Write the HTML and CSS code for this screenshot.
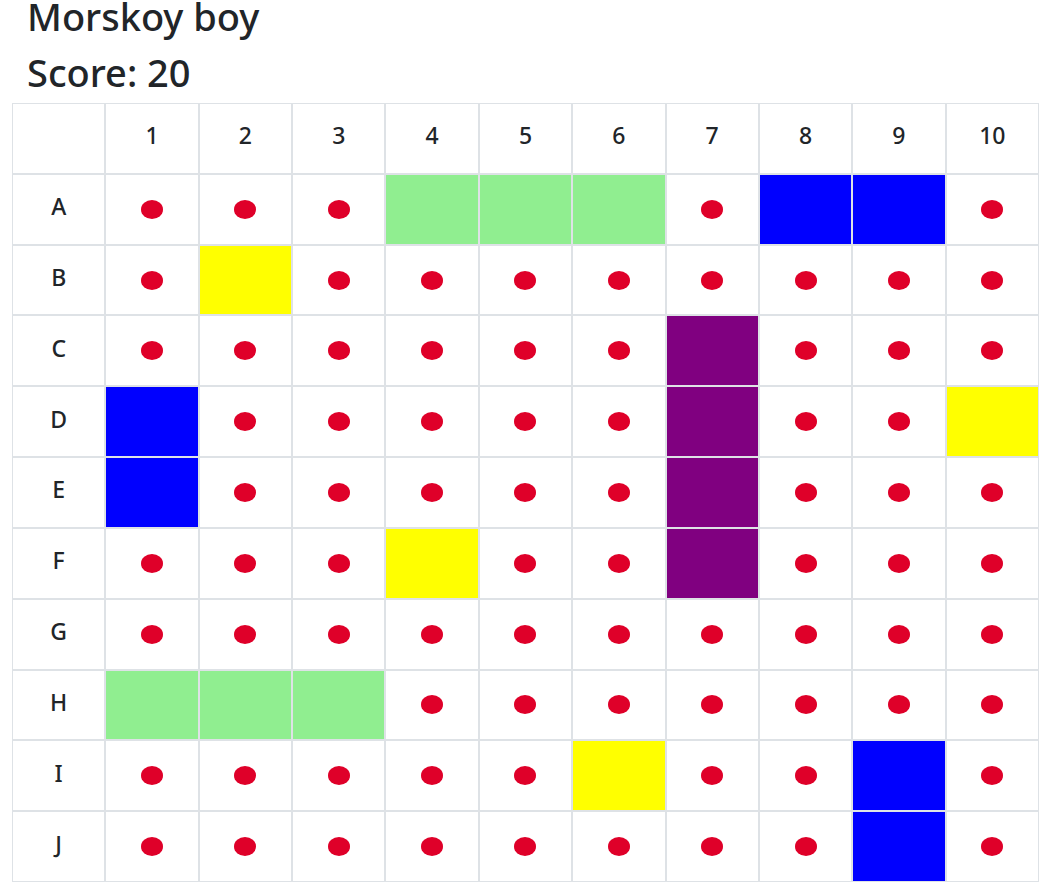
FILE: index.html
```html
<!DOCTYPE html>
<html lang="en">
<head>
<meta charset="utf-8">
<title>Morskoy boy</title>
<link rel="stylesheet" href="styles.css">
</head>
<body>
<header class="heading">
<h1 class="title">Morskoy boy</h1>
<h1 class="title">Score: 20</h1>
</header>
<table class="board">
<tbody id="rows"><tr id="columns"><td></td></tr></tbody>
</table>
<script src="board.js"></script>
</body>
</html>
```

FILE: styles.css
```css
* {
  box-sizing: border-box;
}

body {
  margin: 0;
  padding: 0 10px 10px 12px;
  background: #fff;
  color: #212529;
  font-family: "Segoe UI", "Noto Sans", "Open Sans", sans-serif;
}

.heading {
  display: flex;
  flex-direction: column;
  gap: 24px;
  padding: 0 15px 15px;
}

.title {
  margin: 0;
  font-size: 38px;
  font-weight: 500;
  line-height: 32px;
}

.board {
  width: 100%;
  height: calc(100vh - 113px);
  table-layout: fixed;
  border-collapse: separate;
  border-spacing: 0;
}

.board th,
.board td {
  padding: 0;
  border: 1px solid #dee2e6;
  text-align: center;
  vertical-align: middle;
}

.board th {
  padding-bottom: 6px;
  font-size: 23px;
  font-weight: 500;
  line-height: 28px;
}

.dot {
  display: block;
  width: 22px;
  height: 19px;
  margin: 0 auto;
  border-radius: 50%;
  background: #df0029;
}

.board .green {
  background: #90ee90;
}

.board .blue {
  background: #00f;
}

.board .yellow {
  background: #ff0;
}

.board .purple {
  background: #800080;
}
```

FILE: board.js
```js
const ships = { g: "green", b: "blue", y: "yellow", p: "purple" };
const field = [
  "...ggg.bb.",
  ".y........",
  "......p...",
  "b.....p..y",
  "b.....p...",
  "...y..p...",
  "..........",
  "ggg.......",
  ".....y..b.",
  "........b."
];

function heading(text, scope) {
  const cell = document.createElement("th");
  cell.scope = scope;
  cell.textContent = text;
  return cell;
}

const columns = document.getElementById("columns");
for (let n = 1; n <= 10; n++) columns.append(heading(n, "col"));

field.forEach((line, i) => {
  const row = document.createElement("tr");
  row.append(heading("ABCDEFGHIJ"[i], "row"));
  for (const mark of line) {
    const cell = document.createElement("td");
    if (mark === ".") {
      const dot = document.createElement("span");
      dot.className = "dot";
      cell.append(dot);
    } else {
      cell.className = ships[mark];
    }
    row.append(cell);
  }
  document.getElementById("rows").append(row);
});
```
